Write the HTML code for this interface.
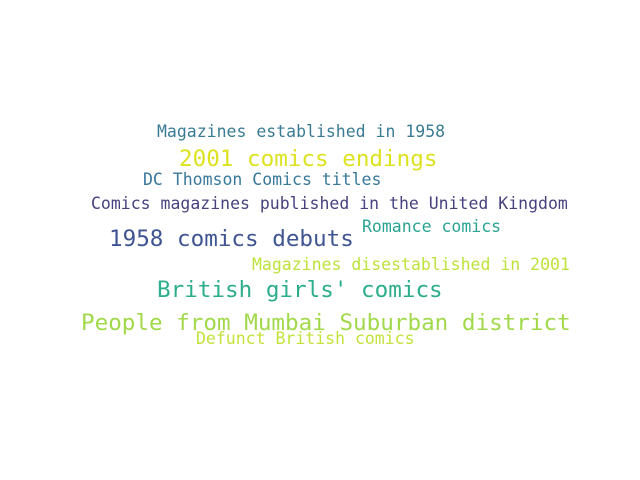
<!DOCTYPE html>
<html><head><style>
html,body{margin:0;padding:0;background:#fff;width:640px;height:480px;overflow:hidden}
div{position:absolute;white-space:pre;font-family:"DejaVu Sans Mono","Liberation Mono",monospace;line-height:1}
.s{font-size:16.5px}.b{font-size:22.6px}
</style></head><body>
<div class="s" style="left:157px;top:124px;color:#3a7b94">Magazines established in 1958</div>
<div class="b" style="left:179px;top:148px;color:#dde21f">2001 comics endings</div>
<div class="s" style="left:143px;top:172px;color:#38789a">DC Thomson Comics titles</div>
<div class="s" style="left:91px;top:196px;color:#47427f">Comics magazines published in the United Kingdom</div>
<div class="b" style="left:109px;top:228px;color:#3f5592">1958 comics debuts</div>
<div class="s" style="left:362px;top:219px;color:#2ba392">Romance comics</div>
<div class="s" style="left:252px;top:257px;color:#bde23a">Magazines disestablished in 2001</div>
<div class="b" style="left:157px;top:279px;color:#2cad8c">British girls' comics</div>
<div class="b" style="left:81px;top:312px;color:#a2d94b">People from Mumbai Suburban district</div>
<div class="s" style="left:196px;top:331px;color:#c3e23c">Defunct British comics</div>
</body></html>
